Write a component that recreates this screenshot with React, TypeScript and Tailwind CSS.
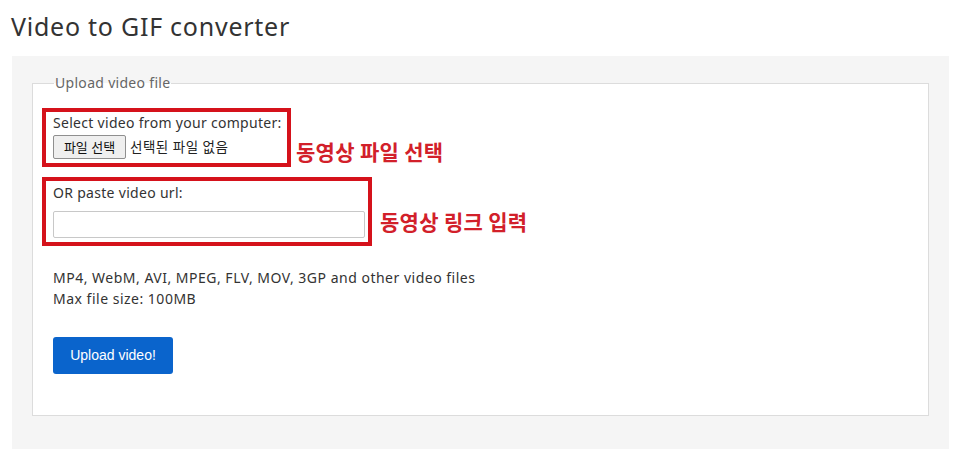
import React from "react";

export default function App() {
  return (
    <div className="w-[961px] h-[459px] bg-white text-[#333] font-['Noto_Sans','Noto_Sans_CJK_KR',sans-serif] overflow-hidden">
      <div className="pl-[11px] pr-[12px]">
        <h1 className="text-[25px] leading-[32px] pt-[10px] font-normal tracking-[0.75px] text-[#333]">Video to GIF converter</h1>
        <div className="mt-[14px] ml-[1px] w-[937px] h-[393px] bg-[#f5f5f5] pt-[19px] px-[20px]">
          <fieldset className="h-[341px] border border-[#dcdcdc] bg-white pl-[9px] pr-[20px] pb-[43px] m-0">
            <legend className="ml-[12px] px-[1px] text-[14px] leading-[16px] tracking-[0.3px] text-[#666]">Upload video file</legend>
            <div className="mt-[17px] flex items-end gap-[5px]">
              <div className="w-[249px] border-[4px] border-[#d5121b] pl-[7px] pt-[1px] pb-[4px]">
                <div className="text-[14px] leading-[20px] tracking-[0.3px] text-[#333]">Select video from your computer:</div>
                <div className="mt-[2px] flex items-center gap-[4px] text-[13px] text-[#222]">
                  <button className="h-[24px] w-[73px] bg-[#efefef] border border-[#8f8f8f] rounded-[2px] text-[13px] leading-[20px] text-[#111]">파일 선택</button>
                  <span className="text-[13.5px] tracking-[0.5px]">선택된 파일 없음</span>
                </div>
              </div>
              <div className="mb-[2px] text-[21px] leading-[28px] font-bold tracking-[0.3px] text-[#d2202a] font-['Noto_Sans_CJK_KR',sans-serif]">동영상 파일 선택</div>
            </div>
            <div className="mt-[10px] flex items-end gap-[8px]">
              <div className="w-[330px] border-[4px] border-[#d5121b] pl-[7px] pt-[2px] pb-[4px]">
                <div className="text-[14px] leading-[20px] tracking-[0.3px] text-[#333]">OR paste video url:</div>
                <input type="text" className="mt-[8px] block w-[312px] h-[27px] border border-[#c8c8c8] rounded-[2px] bg-white" />
              </div>
              <div className="mb-[11px] text-[21px] leading-[28px] font-bold tracking-[0.3px] text-[#d2202a] font-['Noto_Sans_CJK_KR',sans-serif]">동영상 링크 입력</div>
            </div>
            <div className="mt-[21px] pl-[11px] text-[14px] leading-[21px] tracking-[0.5px] text-[#333]">
              <div>MP4, WebM, AVI, MPEG, FLV, MOV, 3GP and other video files</div>
              <div>Max file size: 100MB</div>
            </div>
            <div className="mt-[28px] pl-[11px]">
              <button className="h-[37px] w-[120px] rounded-[3px] bg-[#0a64cc] text-white text-[14px] font-['Liberation_Sans',sans-serif]">Upload video!</button>
            </div>
          </fieldset>
        </div>
      </div>
    </div>
  );
}
